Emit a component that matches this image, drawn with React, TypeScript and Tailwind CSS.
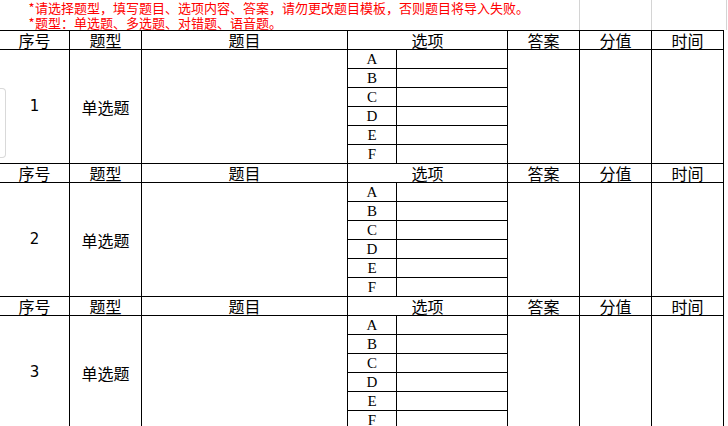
import React from "react";

const cjk = { fontFamily: '"Noto Sans CJK SC", "Noto Sans", sans-serif' };

function Block({ n }: { n: number }) {
  const headers = [
    { t: "序号", c: "col-start-1" },
    { t: "题型", c: "col-start-2" },
    { t: "题目", c: "col-start-3" },
    { t: "选项", c: "col-start-4 col-span-2" },
    { t: "答案", c: "col-start-6" },
    { t: "分值", c: "col-start-7" },
    { t: "时间", c: "col-start-8" },
  ];
  const letters = ["A", "B", "C", "D", "E", "F"];
  return (
    <>
      {headers.map((h) => (
        <div
          key={h.t}
          className={`${h.c} bg-white flex items-end justify-center text-[16px] leading-[18px] text-black`}
        >
          {h.t}
        </div>
      ))}
      <div
        className="col-start-1 row-span-6 bg-white flex items-center justify-center text-[15px] text-black"
        style={{ fontFamily: '"DejaVu Sans", sans-serif' }}
      >
        {n}
      </div>
      <div className="col-start-2 row-span-6 bg-white flex items-center justify-center text-[16px] text-black">
        单选题
      </div>
      <div className="col-start-3 row-span-6 bg-white" />
      {letters.map((l, i) => (
        <React.Fragment key={l}>
          <div
            className="col-start-4 bg-white flex items-center justify-center text-[15px] leading-[18px] text-black"
            style={{ fontFamily: '"Liberation Serif", serif' }}
          >
            {l}
          </div>
          <div className="col-start-5 bg-white" />
          {i === 0 && (
            <>
              <div className="col-start-6 row-span-6 bg-white" />
              <div className="col-start-7 row-span-6 bg-white" />
              <div className="col-start-8 row-span-6 bg-white" />
            </>
          )}
        </React.Fragment>
      ))}
    </>
  );
}

function Notice({ text }: { text: string }) {
  return (
    <div className="flex h-[15px] items-center">
      <span className="w-[7px] text-center">*</span>
      {Array.from(text).map((ch, i) => (
        <span key={i} className="w-[13px] text-center">
          {ch}
        </span>
      ))}
    </div>
  );
}

export default function App() {
  return (
    <div className="relative w-[728px] h-[426px] overflow-hidden bg-white" style={cjk}>
      {/* notice area */}
      <div className="relative h-[30px]">
        <div className="absolute top-0 bottom-0 left-[579px] w-px bg-[#d4d4d4]" />
        <div className="absolute top-0 bottom-0 left-[651px] w-px bg-[#d4d4d4]" />
        <div className="absolute top-0 bottom-0 left-[726px] w-px bg-[#d4d4d4]" />
        <div className="relative pl-[28px] text-[13px] leading-[15px] text-[#ff0000] whitespace-nowrap">
          <Notice text="请选择题型，填写题目、选项内容、答案，请勿更改题目模板，否则题目将导入失败。" />
          <Notice text="题型：单选题、多选题、对错题、语音题。" />
        </div>
      </div>
      {/* sheet */}
      <div className="w-[724px] bg-black pt-px pr-px grid grid-cols-[69px_71px_205px_48px_110px_71px_71px_71px] auto-rows-[18px] gap-px">
        <Block n={1} />
        <Block n={2} />
        <Block n={3} />
      </div>
      <div className="absolute left-0 top-[88px] w-[6px] h-[70px] bg-white border border-l-0 border-[#d9d9d9] rounded-r-[4px]" />
    </div>
  );
}
